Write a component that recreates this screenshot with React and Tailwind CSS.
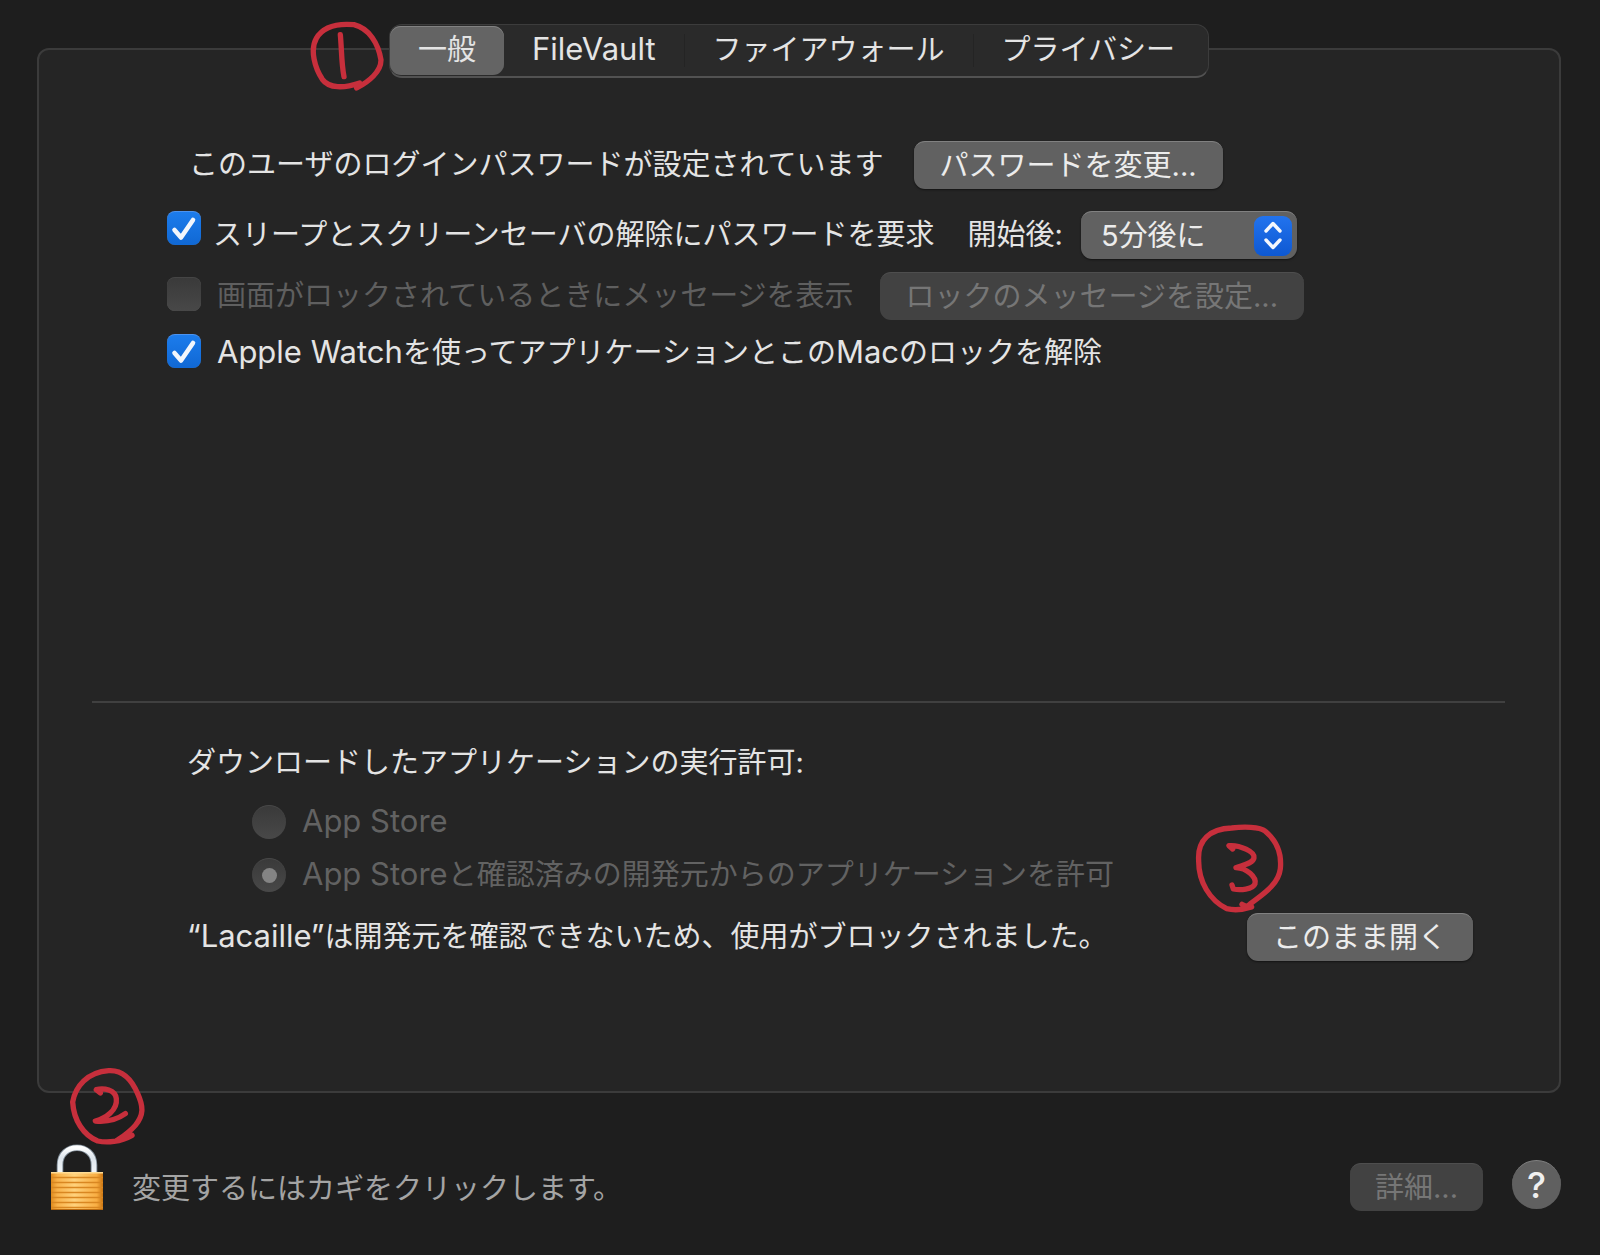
import React, { useState } from "react";

const pushButton =
  "h-12 shrink-0 whitespace-nowrap rounded-[11px] text-center";
const activeButton =
  "border-t border-[#818181] bg-[#616161] text-[#ececec] shadow-[0_1px_2px_rgba(0,0,0,0.5)]";
const disabledButton = "border-t border-[#4e4e4e] bg-[#424242] text-[#767676]";

function Latin({ children }) {
  return <span className="text-[31px] leading-none">{children}</span>;
}

function Checkbox({ id, checked, disabled, onChange, className = "" }) {
  return (
    <span className={`grid size-[34px] shrink-0 ${className}`}>
      <input
        id={id}
        type="checkbox"
        checked={checked}
        disabled={disabled}
        onChange={onChange}
        className="col-start-1 row-start-1 size-full appearance-none rounded-[8px] border-t border-[#6a6a6a] bg-[#555] checked:border-[#4b93f0] checked:bg-linear-to-b checked:from-[#1c7cec] checked:to-[#1068d4] disabled:border-[#454545] disabled:bg-linear-to-b disabled:from-[#3a3a3a] disabled:to-[#484848]"
      />
      {checked && (
        <svg
          viewBox="0 0 34 34"
          aria-hidden="true"
          className="pointer-events-none col-start-1 row-start-1 size-full"
          fill="none"
          stroke="#f2f6fc"
          strokeWidth="4.6"
          strokeLinecap="round"
          strokeLinejoin="round"
        >
          <path d="M7.5 19 L14 26.5 L26 9" />
        </svg>
      )}
    </span>
  );
}

function Radio({ id, checked }) {
  return (
    <span className="grid size-[34px] shrink-0 place-items-center">
      <input
        id={id}
        type="radio"
        name="allow-apps"
        defaultChecked={checked}
        disabled
        className="peer col-start-1 row-start-1 size-full appearance-none rounded-full border-t border-[#484848] bg-linear-to-b from-[#3a3a3a] to-[#484848]"
      />
      <span className="pointer-events-none col-start-1 row-start-1 hidden size-[15px] rounded-full bg-[#848484] peer-checked:block" />
    </span>
  );
}

function Sketch({ viewBox, className, children }) {
  return (
    <svg
      viewBox={viewBox}
      aria-hidden="true"
      className={`pointer-events-none absolute z-10 ${className}`}
      fill="none"
      stroke="#c72f3c"
      strokeWidth="16"
      strokeLinecap="round"
      strokeLinejoin="round"
    >
      {children}
    </svg>
  );
}

function LockIcon() {
  return (
    <svg viewBox="0 0 54 68" className="h-[68px] w-[54px]" aria-hidden="true">
      <defs>
        <linearGradient id="brass" x1="0" x2="1" y1="0" y2="0">
          <stop offset="0" stopColor="#e08a1c" />
          <stop offset="0.12" stopColor="#f9b24a" />
          <stop offset="0.45" stopColor="#ffd27c" />
          <stop offset="0.88" stopColor="#f8ad42" />
          <stop offset="1" stopColor="#c97410" />
        </linearGradient>
        <linearGradient id="steel" x1="0" x2="0" y1="0" y2="1">
          <stop offset="0" stopColor="#ffffff" />
          <stop offset="0.4" stopColor="#dde5ec" />
          <stop offset="1" stopColor="#f2f6f9" />
        </linearGradient>
      </defs>
      <path d="M10 30 V22 C10 -1 44 -1 44 22 V30" fill="none" stroke="#7c8994" strokeWidth="6.6" />
      <path d="M10 30 V22 C10 -1 44 -1 44 22 V30" fill="none" stroke="url(#steel)" strokeWidth="4.8" />
      <rect x="1" y="29" width="52" height="38" rx="1" fill="url(#brass)" />
      <path
        d="M1 34.5H53M1 39.5H53M1 44.5H53M1 49.5H53M1 54.5H53M1 59.5H53M1 64.5H53"
        stroke="#d98722"
        strokeWidth="1.4"
      />
      <path d="M1 29.7H53" stroke="#ffdc94" strokeWidth="1.4" />
      <path d="M1 66.5H53" stroke="#b96a10" strokeWidth="1" />
    </svg>
  );
}

const tabs = [
  { label: "一般", pad: "px-[28px]" },
  { label: <Latin>FileVault</Latin>, pad: "px-[28px]" },
  { label: "ファイアウォール", pad: "px-[28px]" },
  { label: "プライバシー", pad: "pl-[28px] pr-[33px]" },
];

export default function App() {
  const [requirePassword, setRequirePassword] = useState(true);
  const [watchUnlock, setWatchUnlock] = useState(true);

  return (
    <main className="flex min-h-screen flex-col bg-[#1e1e1e] pt-6 pr-[39px] pb-[44px] pl-[37px] font-['Inter','Noto_Sans_CJK_JP',sans-serif] text-[29px] leading-[44px] text-[#e4e4e4]">
      <nav className="relative z-10 flex h-[54px] self-center rounded-[13px] border border-[#3c3c3c] border-b-2 border-b-[#525252] bg-[#2a2a2a] py-px">
        <Sketch viewBox="60 60 231 219" className="top-[-5px] left-[-81px] h-[73px] w-[77px]">
          <path d="M212 249 C165 265 120 266 100 238 C78 205 62 150 82 115 C105 75 150 70 195 74 C240 85 268 130 276 180 C276 215 240 245 203 264" />
          <path d="M154 104 C158 145 157 190 165 230" />
        </Sketch>
        {tabs.map((tab, i) => (
          <React.Fragment key={i}>
            {i > 1 && <span className="my-2 w-px bg-[#242424]" />}
            <button
              type="button"
              aria-pressed={i === 0}
              className={`${tab.pad} h-full whitespace-nowrap rounded-[11px] pb-px leading-[44px] aria-pressed:bg-[#646464] aria-pressed:shadow-[inset_0_1px_0_#828282]`}
            >
              {tab.label}
            </button>
          </React.Fragment>
        ))}
      </nav>

      <section className="-mt-[30px] flex flex-1 flex-col rounded-xl border-2 border-[#3b3b3b] bg-[#252525] pt-[91px] pr-[54px] pb-[130px] pl-[53px]">
        <div className="flex flex-1 flex-col items-start pl-[75px]">
          <div className="flex h-12 items-center pl-[22px]">
            <span className="whitespace-nowrap">このユーザのログインパスワードが設定されています</span>
            <button type="button" className={`${pushButton} ${activeButton} ml-[30px] px-[26px]`}>
              パスワードを変更...
            </button>
          </div>

          <div className="mt-[22px] flex h-12 items-center">
            <Checkbox
              id="require-password"
              checked={requirePassword}
              onChange={(e) => setRequirePassword(e.target.checked)}
              className="self-start"
            />
            <label htmlFor="require-password" className="ml-[12px] whitespace-nowrap">
              スリープとスクリーンセーバの解除にパスワードを要求
            </label>
            <label htmlFor="delay" className="ml-[33px] whitespace-nowrap">
              開始後:
            </label>
            <div className="relative ml-[18px]">
              <select
                id="delay"
                defaultValue="5"
                className={`block h-12 w-[216px] appearance-none rounded-[11px] pl-5 ${activeButton}`}
              >
                <option value="0">すぐに</option>
                <option value="5">5分後に</option>
                <option value="15">15分後に</option>
              </select>
              <svg
                viewBox="0 0 38 40"
                aria-hidden="true"
                className="pointer-events-none absolute top-[5px] right-[5px] h-10 w-[38px] rounded-[9px] bg-linear-to-b from-[#2273ee] to-[#0d58d2]"
                fill="none"
                stroke="#f4f7fd"
                strokeWidth="3.4"
                strokeLinecap="round"
                strokeLinejoin="round"
              >
                <path d="M12 15 L19 7.5 L26 15 M12 24 L19 31.5 L26 24" />
              </svg>
            </div>
          </div>

          <div className="mt-[13px] flex h-12 items-center">
            <Checkbox id="lock-message" checked={false} disabled className="mb-1" />
            <label htmlFor="lock-message" className="ml-[16px] whitespace-nowrap text-[#5f5f5f]">
              画面がロックされているときにメッセージを表示
            </label>
            <button type="button" disabled className={`${pushButton} ${disabledButton} ml-[26px] px-[26px]`}>
              ロックのメッセージを設定...
            </button>
          </div>

          <div className="mt-[11px] flex items-center">
            <Checkbox
              id="watch-unlock"
              checked={watchUnlock}
              onChange={(e) => setWatchUnlock(e.target.checked)}
              className="mb-1"
            />
            <label htmlFor="watch-unlock" className="ml-[16px] whitespace-nowrap">
              <Latin>Apple Watch</Latin>を使ってアプリケーションとこの<Latin>Mac</Latin>のロックを解除
            </label>
          </div>
        </div>

        <hr className="h-[2px] border-0 bg-[#404040]" />

        <div className="pt-[38px] pr-[32px] pl-[95px]">
          <fieldset>
            <legend>ダウンロードしたアプリケーションの実行許可:</legend>
            <div className="flex flex-col gap-[9px] pt-[15px] pl-[65px] text-[#626262]">
              <div className="flex items-center gap-4">
                <Radio id="allow-store" />
                <label htmlFor="allow-store">
                  <Latin>App Store</Latin>
                </label>
              </div>
              <div className="flex items-center gap-4">
                <Radio id="allow-identified" checked />
                <label htmlFor="allow-identified" className="whitespace-nowrap">
                  <Latin>App Store</Latin>と確認済みの開発元からのアプリケーションを許可
                </label>
              </div>
            </div>
          </fieldset>
          <div className="mt-[16px] flex items-center justify-between">
            <p className="whitespace-nowrap">
              <Latin>“Lacaille”</Latin>は開発元を確認できないため、使用がブロックされました。
            </p>
            <div className="relative">
              <button type="button" className={`${pushButton} ${activeButton} block px-[26px]`}>
                このまま開く
              </button>
              <Sketch viewBox="102 68 276 270" className="top-[-90px] left-[-53px] h-[90px] w-[92px]">
                <path d="M246 312 C254 318 265 318 275 320 C250 328 220 330 200 325 C150 300 115 245 116 180 C112 120 150 85 215 83 C250 79 300 79 315 92 C355 125 365 165 361 205 C355 260 290 292 262 318" />
                <path d="M218 146 L207 136 C240 133 285 155 282 172 C280 190 245 195 228 202 C260 203 290 230 285 250 C278 268 240 270 220 266 L216 254" />
              </Sketch>
            </div>
          </div>
        </div>
      </section>

      <footer className="flex items-end pt-[50px] pl-[13px]">
        <div className="relative">
          <button type="button" aria-label="カギ" className="block">
            <LockIcon />
          </button>
          <Sketch viewBox="146 80 231 237" className="top-[-76px] left-[19px] h-[79px] w-[77px]">
            <path d="M335 285 C300 305 260 308 232 302 C190 285 160 240 157 185 C165 140 200 95 265 91 C310 88 335 120 352 160 C370 200 370 225 345 255 C325 278 305 290 290 300" />
            <path d="M240 158 L228 148 C250 142 285 148 288 175 C292 210 255 235 225 242 C255 245 290 238 315 220" />
          </Sketch>
        </div>
        <p className="ml-[28px] text-[#a4a4a4]">変更するにはカギをクリックします。</p>
        <button type="button" disabled className={`${pushButton} ${disabledButton} ml-auto px-[25px]`}>
          詳細...
        </button>
        <button
          type="button"
          aria-label="ヘルプ"
          className="mb-[2px] ml-[29px] size-[49px] shrink-0 rounded-full border-t border-[#808080] bg-[#606060] text-[36px] font-medium text-[#f0f0f0]"
        >
          ?
        </button>
      </footer>
    </main>
  );
}
